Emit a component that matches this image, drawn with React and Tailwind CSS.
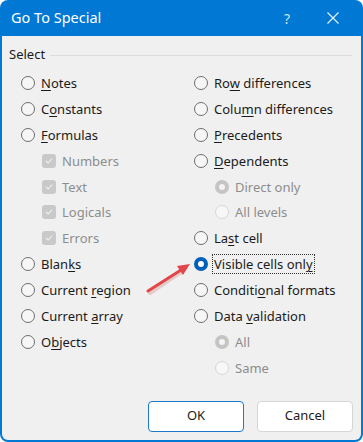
import React from 'react';

const FONT = { fontFamily: '"Noto Sans", "Open Sans", sans-serif' };

function Radio({ checked = false, disabled = false }) {
  if (checked && !disabled) {
    return (
      <span className="w-[14px] h-[14px] rounded-full bg-[#005fb8] flex items-center justify-center shrink-0">
        <span className="w-[6px] h-[6px] rounded-full bg-white" />
      </span>
    );
  }
  if (checked && disabled) {
    return (
      <span className="w-[14px] h-[14px] rounded-full bg-[#c4c4c4] flex items-center justify-center shrink-0">
        <span className="w-[6px] h-[6px] rounded-full bg-[#f3f3f3]" />
      </span>
    );
  }
  if (disabled) {
    return <span className="w-[14px] h-[14px] rounded-full border border-[#d6d6d6] bg-[#f7f7f7] shrink-0" />;
  }
  return <span className="w-[14px] h-[14px] rounded-full border border-[#6e6e6e] bg-[#f6f6f6] shrink-0" />;
}

function Check() {
  return (
    <span className="w-[14px] h-[14px] rounded-[3px] bg-[#c9c9c9] flex items-center justify-center shrink-0">
      <svg width="8" height="8" viewBox="0 0 8 8" fill="none">
        <path d="M1.2 4.2 L3.2 6 L6.8 2" stroke="#f2f2f2" strokeWidth="1.1" strokeLinecap="round" strokeLinejoin="round" />
      </svg>
    </span>
  );
}

// label with access-key letter underlined
function Label({ text, u, dim, focus }) {
  let content = text;
  if (u != null) {
    content = (
      <>
        {text.slice(0, u)}
        <span className="underline underline-offset-2 decoration-1">{text[u]}</span>
        {text.slice(u + 1)}
      </>
    );
  }
  return (
    <span
      className={`text-[13px] leading-[18px] whitespace-nowrap ${dim ? 'text-[#8d8d8d]' : 'text-[#1b1b1b]'} ${
        focus ? 'outline outline-1 outline-dotted outline-[#333] outline-offset-0 px-[1px] -ml-[1px]' : ''
      }`}
    >
      {content}
    </span>
  );
}

function Row({ indent = false, children }) {
  return <div className={`h-[25.9px] flex items-center gap-[6px] ${indent ? 'pl-[21px]' : ''}`}>{children}</div>;
}

export default function App() {
  return (
    <div className="w-[363px] h-[442px] bg-white relative" style={FONT}>
      <div className="w-full h-full rounded-[8px] bg-[#0078d4] flex flex-col overflow-hidden">
        {/* title bar */}
        <div className="h-[36px] flex items-center shrink-0 text-white">
          <span className="pl-[11px] text-[14.5px] flex-1">Go To Special</span>
          <span className="w-[46px] text-center text-[14px] text-[#cfe4f7]">?</span>
          <span className="w-[46px] mr-[7px] flex justify-center">
            <svg width="14" height="14" viewBox="0 0 14 14">
              <path d="M1.5 1.5 L12.5 12.5 M12.5 1.5 L1.5 12.5" stroke="#e6f1fb" strokeWidth="1.2" />
            </svg>
          </span>
        </div>

        {/* body */}
        <div className="flex-1 mx-[2px] mb-[2px] bg-[#f0f0f0] rounded-b-[6px] flex flex-col">
          <div className="h-[38px] flex items-center pl-[7px] pr-[9px] gap-[5px]">
            <span className="text-[13px] text-[#1b1b1b]">Select</span>
            <span className="flex-1 h-px bg-[#dcdcdc]" />
          </div>

          <div className="flex mt-[-4px]">
            <div className="w-[192px] pl-[19px]">
              <Row><Radio /><Label text="Notes" u={0} /></Row>
              <Row><Radio /><Label text="Constants" u={1} /></Row>
              <Row><Radio /><Label text="Formulas" u={0} /></Row>
              <Row indent><Check /><Label text="Numbers" dim /></Row>
              <Row indent><Check /><Label text="Text" dim /></Row>
              <Row indent><Check /><Label text="Logicals" dim /></Row>
              <Row indent><Check /><Label text="Errors" dim /></Row>
              <Row><Radio /><Label text="Blanks" u={4} /></Row>
              <Row><Radio /><Label text="Current region" u={8} /></Row>
              <Row><Radio /><Label text="Current array" u={8} /></Row>
              <Row><Radio /><Label text="Objects" u={1} /></Row>
            </div>
            <div className="flex-1">
              <Row><Radio /><Label text="Row differences" u={2} /></Row>
              <Row><Radio /><Label text="Column differences" u={4} /></Row>
              <Row><Radio /><Label text="Precedents" u={0} /></Row>
              <Row><Radio /><Label text="Dependents" u={0} /></Row>
              <Row indent><Radio checked disabled /><Label text="Direct only" dim /></Row>
              <Row indent><Radio disabled /><Label text="All levels" dim /></Row>
              <Row><Radio /><Label text="Last cell" u={2} /></Row>
              <Row><Radio checked /><Label text="Visible cells only" u={17} focus /></Row>
              <Row><Radio /><Label text="Conditional formats" u={7} /></Row>
              <Row><Radio /><Label text="Data validation" u={5} /></Row>
              <Row indent><Radio checked disabled /><Label text="All" dim /></Row>
              <Row indent><Radio disabled /><Label text="Same" dim /></Row>
            </div>
          </div>

          <div className="flex justify-end gap-[13px] pr-[8px] mt-[20px]">
            <button className="w-[96px] h-[31px] rounded-[4px] bg-white border border-[#1e78c8] text-[13px] text-[#1b1b1b]">
              OK
            </button>
            <button className="w-[96px] h-[31px] rounded-[4px] bg-white border border-[#d6d6d6] text-[13px] text-[#1b1b1b]">
              Cancel
            </button>
          </div>
        </div>
      </div>

      {/* red annotation arrow */}
      <svg className="absolute left-0 top-0 pointer-events-none" width="363" height="442" viewBox="0 0 363 442">
        <path d="M149 292 L180 271" stroke="#b33" strokeOpacity="0.2" strokeWidth="4" strokeLinecap="round" transform="translate(1 1)" />
        <path d="M148 291 L181 270" stroke="#e0464a" strokeWidth="3" strokeLinecap="round" />
        <path d="M190 264 L177 266 L183 275 Z" fill="#e0464a" />
      </svg>
    </div>
  );
}
